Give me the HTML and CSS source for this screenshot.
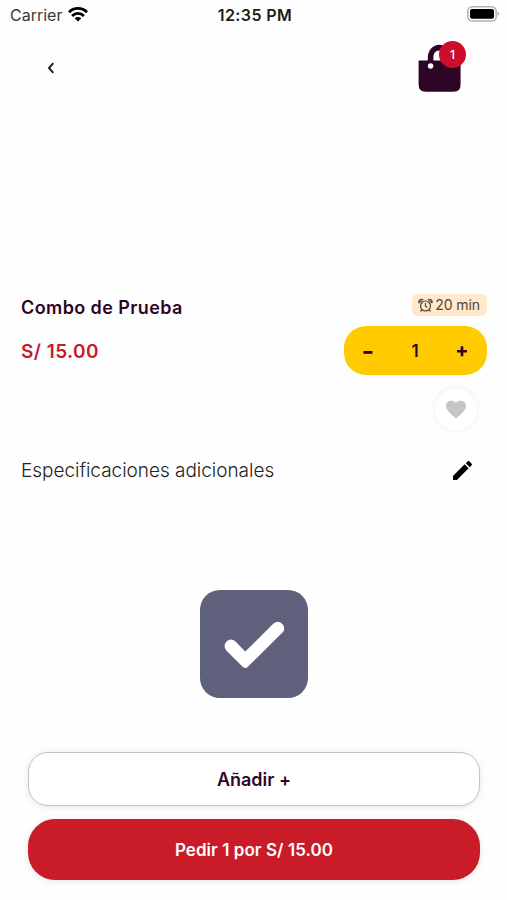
FILE: index.html
```
<!DOCTYPE html>
<html lang="es">
<head>
    <meta charset="UTF-8">
    <meta name="viewport" content="width=device-width, initial-scale=1.0">
    <title>Combo de Prueba</title>
    <link rel="stylesheet" href="styles.css">
</head>
<body>
    <div class="screen">
        <div class="status-bar">
            <div class="status-left">
                <span class="carrier">Carrier</span>
                <svg class="wifi" viewBox="0 0 20 15" width="20" height="15">
                    <g fill="none" stroke="#000" stroke-width="2.8">
                        <path d="M1 5.2 C6 0.2 14 0.2 19 5.2"/>
                        <path d="M4.1 8.9 C7.5 5.6 12.5 5.6 15.9 8.9"/>
                    </g>
                    <path d="M6.7 11.3 C8.6 9.5 11.4 9.5 13.3 11.3 L10 14.6 Z"/>
                </svg>
            </div>
            <span class="clock">12:35 PM</span>
            <svg class="battery" viewBox="0 0 34 16" width="34" height="16">
                <rect x="1.8" y="0.8" width="28.4" height="14.2" rx="4.6" fill="#fff" stroke="#b4b4b4" stroke-width="1.6"/>
                <rect x="4" y="2.9" width="24" height="9.8" rx="2"/>
                <path d="M31.6 5.6 C33.3 6.4 33.3 9.2 31.6 10 Z" fill="#999"/>
            </svg>
        </div>

        <div class="header">
            <svg class="back" viewBox="0 0 8 12" width="8" height="12">
                <path d="M6.3 1.2 L2 6 L6.3 10.8" fill="none" stroke="#2b1a38" stroke-width="2"/>
            </svg>
            <div class="bag">
                <svg viewBox="0 0 44 50" width="44" height="50">
                    <path d="M0.6 17.4 H42.6 V41.5 Q42.6 48.8 35.6 48.8 H7.6 Q0.6 48.8 0.6 41.5 Z" fill="#2e0527"/>
                    <path d="M12.6 21 V14.5 C12.6 1.5 30 1.5 30 13.5 V20" fill="none" stroke="#2e0527" stroke-width="5.6"/>
                    <circle cx="12.6" cy="23" r="2.7" fill="#fff"/>
                </svg>
                <span class="badge">1</span>
            </div>
        </div>

        <div class="product">
            <div class="row title-row">
                <h1 class="name">Combo de Prueba</h1>
                <div class="time">
                    <svg viewBox="0 0 16 16" width="15" height="15" fill="none" stroke="#55433f" stroke-width="1.3">
                        <circle cx="8" cy="8.5" r="5.3"/>
                        <path d="M8 5.3 V8.8 L10 10.2 M4.2 12.5 L2.7 14.4 M11.8 12.5 L13.3 14.4"/>
                        <path d="M1.2 5 C0.2 2.6 2.7 0.5 4.9 1.8 Z M14.8 5 C15.8 2.6 13.3 0.5 11.1 1.8 Z"/>
                    </svg>
                    <span class="time-text">20 min</span>
                </div>
            </div>
            <div class="row price-row">
                <span class="price">S/ 15.00</span>
                <div class="counter">
                    <svg viewBox="0 0 12 12" width="12" height="12"><path d="M1.4 7.4 H10.4" stroke="#2e0527" stroke-width="2.8"/></svg>
                    <span class="count">1</span>
                    <svg viewBox="0 0 12 12" width="12" height="12"><path d="M1 6.2 H11 M6 1.2 V11.2" stroke="#2e0527" stroke-width="2.6"/></svg>
                </div>
            </div>
            <div class="favorite">
                <svg viewBox="0 0 22 19" width="22" height="19">
                    <path d="M11 18.3 C8 15.8 1 10.7 1 5.9 C1 0.8 7.7 -1.1 11 3 C14.3 -1.1 21 0.8 21 5.9 C21 10.7 14 15.8 11 18.3 Z" fill="#c5c5c5"/>
                </svg>
            </div>
            <div class="row notes-row">
                <span class="notes">Especificaciones adicionales</span>
                <svg class="pencil" viewBox="3 3 18 18" width="19" height="19">
                    <path d="M3 17.25V21h3.75L17.81 9.94l-3.75-3.75L3 17.25zM20.71 7.04c.39-.39.39-1.02 0-1.41l-2.34-2.34c-.39-.39-1.02-.39-1.41 0l-1.83 1.83 3.75 3.75 1.83-1.83z"/>
                </svg>
            </div>
        </div>

        <div class="check-box">
            <svg viewBox="0 0 108 108" width="108" height="108">
                <path d="M26.5 51.5 Q31 47.5 35.5 51.5 L45.3 61.5 L73.5 33.6 Q78 29.8 82.2 33.8 Q86.3 38.5 82.5 42.5 L47.7 77 Q45.3 79 42.9 77 L26.3 60.5 Q22.7 55.8 26.5 51.5 Z" fill="#fff"/>
            </svg>
        </div>

        <div class="actions">
            <button class="btn btn-add">Añadir +</button>
            <button class="btn btn-order">Pedir 1 por S/ 15.00</button>
        </div>
    </div>
</body>
</html>
```
FILE: styles.css
```
* {
    margin: 0;
    padding: 0;
    box-sizing: border-box;
}

body {
    font-family: Inter, "Liberation Sans", sans-serif;
    background: #fefefe;
    color: #2e0527;
}

.screen {
    width: 507px;
    height: 900px;
    overflow: hidden;
    display: flex;
    flex-direction: column;
}

.status-bar {
    height: 30px;
    padding: 0 7px 0 10px;
    display: grid;
    grid-template-columns: 1fr auto 1fr;
    align-items: center;
}

.status-left {
    display: flex;
    align-items: center;
    gap: 6px;
}

.carrier {
    font-size: 16px;
    color: #3a3a3a;
}

.wifi {
    margin-top: -2px;
}

.clock {
    font-size: 16px;
    font-weight: 600;
    letter-spacing: 0.4px;
    color: #1c1c1c;
}

.battery {
    justify-self: end;
    margin-top: -2px;
}

.header {
    height: 64px;
    padding: 13px 46px 0 47px;
    display: flex;
    justify-content: space-between;
}

.back {
    margin-top: 19px;
}

.bag {
    position: relative;
    width: 44px;
    height: 50px;
    margin-right: -1px;
}

.badge {
    position: absolute;
    top: -2px;
    right: -4px;
    width: 27px;
    height: 27px;
    border-radius: 50%;
    background: #ce0d2b;
    color: #fff;
    font-size: 12px;
    font-weight: 500;
    line-height: 28px;
    text-align: center;
}

.product {
    padding: 200px 20px 0 21px;
}

.row {
    display: flex;
    align-items: center;
    justify-content: space-between;
}

.title-row {
    height: 22px;
}

.name {
    padding-top: 5px;
    font-size: 18px;
    font-weight: 600;
    line-height: 22px;
    letter-spacing: 0.4px;
}

.time {
    width: 75px;
    height: 22px;
    padding: 0 7px 0 6px;
    border-radius: 6px;
    background: #ffe9cb;
    display: flex;
    align-items: center;
    justify-content: space-between;
}

.time-text {
    margin-top: -1px;
    font-size: 14px;
    color: #55433f;
    letter-spacing: -0.1px;
}

.price-row {
    height: 49px;
    margin-top: 10px;
}

.price {
    padding-top: 2px;
    font-size: 19px;
    font-weight: 600;
    letter-spacing: 0.45px;
    color: #c81a2b;
}

.counter {
    width: 143px;
    height: 49px;
    padding: 0 19px 0 18px;
    border-radius: 22px;
    background: #ffcb00;
    display: flex;
    align-items: center;
    justify-content: space-between;
}

.count {
    font-size: 17px;
    font-weight: 600;
}

.favorite {
    width: 42px;
    height: 42px;
    margin: 13px 10px 0 auto;
    border-radius: 50%;
    background: #fff;
    box-shadow: 0 0 6px rgba(0, 0, 0, 0.07);
    display: flex;
    align-items: center;
    justify-content: center;
}

.notes-row {
    height: 30px;
    margin-top: 25px;
    padding-right: 15px;
}

.notes {
    font-size: 19px;
    font-weight: 300;
    letter-spacing: -0.03px;
    color: #222;
}

.check-box {
    width: 108px;
    height: 108px;
    margin: 105px 0 0 200px;
    border-radius: 20px;
    background: #5f607b;
}

.actions {
    margin: 54px 27px 0 28px;
    display: flex;
    flex-direction: column;
    gap: 13px;
}

.btn {
    font-family: inherit;
    font-weight: 600;
    border: none;
    box-shadow: 0 1px 7px rgba(0, 0, 0, 0.1);
}

.btn-add {
    height: 54px;
    border: 1px solid #c4c4c4;
    border-radius: 20px;
    background: #fff;
    color: #2e0527;
    font-size: 18px;
}

.btn-order {
    height: 61px;
    border-radius: 27px;
    background: #c91c28;
    color: #fff;
    font-size: 17px;
    letter-spacing: 0.05px;
}
```
